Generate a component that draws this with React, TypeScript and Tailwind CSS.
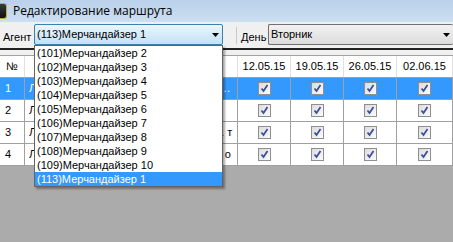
import React from "react";

const agents = [
  "(101)Мерчандайзер 2",
  "(102)Мерчандайзер 3",
  "(103)Мерчандайзер 4",
  "(104)Мерчандайзер 5",
  "(105)Мерчандайзер 6",
  "(106)Мерчандайзер 7",
  "(107)Мерчандайзер 8",
  "(108)Мерчандайзер 9",
  "(109)Мерчандайзер 10",
  "(113)Мерчандайзер 1",
];

const dates = ["12.05.15", "19.05.15", "26.05.15", "02.06.15"];

const rows = [
  { n: "1", name: "Лента гипермаркет, ул. Правды 14, г. Москва, Россия", cut: true },
  { n: "2", name: "Лента", cut: false },
  { n: "3", name: "Лента супермаркет, пр-т Мира 12, маг. т", cut: false },
  { n: "4", name: "Лента супермаркет, ул. Лесная 3, маг. о", cut: false },
];

function Arrow() {
  return (
    <svg width="7" height="4" viewBox="0 0 7 4">
      <path d="M0 0h7L3.5 4z" fill="#000" />
    </svg>
  );
}

function Check() {
  return (
    <div className="flex h-[13px] w-[13px] items-center justify-center border border-[#8f8f8f] bg-gradient-to-br from-[#dcdcdc] to-[#fbfbfb]">
      <svg width="9" height="9" viewBox="0 0 9 9">
        <path d="M1.5 4.5l2 2.5 4-6" fill="none" stroke="#3d4f9c" strokeWidth="1.8" />
      </svg>
    </div>
  );
}

export default function App() {
  return (
    <div
      className="relative h-[242px] w-[453px] overflow-hidden bg-[#ababab] text-[11px] text-black"
      style={{ fontFamily: '"Liberation Sans", Arial, sans-serif' }}
    >
      {/* title */}
      <div className="flex h-[22px] items-center bg-gradient-to-b from-[#b9d1ea] to-[#cddff1]">
        <div className="-ml-[10px] mr-[7px] h-[14px] w-[16px] rounded-[2px] bg-gradient-to-b from-[#3a3a3a] to-[#111] ring-1 ring-[#c9a43a]" />
        <span className="text-[12px]" style={{ fontFamily: '"Open Sans", "Noto Sans", sans-serif' }}>
          Редактирование маршрута
        </span>
      </div>

      {/* toolbar */}
      <div className="flex h-[26px] items-start bg-[#f0f0f0] pt-[2px]">
        <span className="ml-[3px] mt-[5px] w-[31px]">Агент</span>
        <div className="flex h-[21px] w-[189px] items-center justify-between rounded-[2px] border border-[#3c7fb1] bg-gradient-to-b from-[#eaf6fd] to-[#c2e2f6] pl-[2px] pr-[3px]">
          <span>(113)Мерчандайзер 1</span>
          <Arrow />
        </div>
        <div className="ml-[13px] mt-[3px] h-[17px] w-px bg-[#c8c8c8]" />
        <span className="ml-[4px] mt-[5px] w-[27px]">День</span>
        <div className="flex h-[21px] flex-1 items-center justify-between rounded-[2px] border border-r-0 border-[#707070] bg-gradient-to-b from-[#f2f2f2] to-[#dcdcdc] pl-[2px] pr-[3px]">
          <span>Вторник</span>
          <Arrow />
        </div>
      </div>

      {/* grid */}
      <div className="border-t-2 border-[#202020] bg-[#f0f0f0] pt-[5px]">
        <div className="grid grid-cols-[25px_213px_53px_53px_53px_56px] border-t border-[#a0a0a0] bg-white">
          <div className="flex h-[21px] items-center justify-center border-r border-[#e0e0e0]">№</div>
          <div className="border-r border-[#e0e0e0]" />
          {dates.map((d) => (
            <div key={d} className="flex h-[21px] items-center justify-center border-r border-[#e0e0e0]">
              {d}
            </div>
          ))}
          {rows.map((r, i) => {
            const sel = i === 0;
            const cell = `flex h-[22px] items-center border-t border-r border-[#a0a0a0] ${sel ? "bg-[#3399ff] text-white" : "bg-white"}`;
            return (
              <React.Fragment key={r.n}>
                <div className={`${cell} pl-[5px]`}>{r.n}</div>
                <div className={`${cell} overflow-hidden pl-[4px] pr-[2px]`}>
                  <span className={r.cut ? "truncate" : "whitespace-nowrap"}>{r.name}</span>
                </div>
                {dates.map((d) => (
                  <div key={d} className={`${cell} justify-center`}>
                    <Check />
                  </div>
                ))}
              </React.Fragment>
            );
          })}
        </div>
        <div className="h-px bg-[#a0a0a0]" />
      </div>

      {/* open list */}
      <div className="absolute left-[34px] top-[45px] w-[189px] border border-[#646464] bg-white shadow-[2px_2px_2px_rgba(0,0,0,0.35)]">
        {agents.map((a, i) => (
          <div
            key={a}
            className={`h-[14px] pl-[2px] leading-[14px] ${i === agents.length - 1 ? "bg-[#3399ff] text-white" : ""}`}
          >
            {a}
          </div>
        ))}
      </div>
    </div>
  );
}
